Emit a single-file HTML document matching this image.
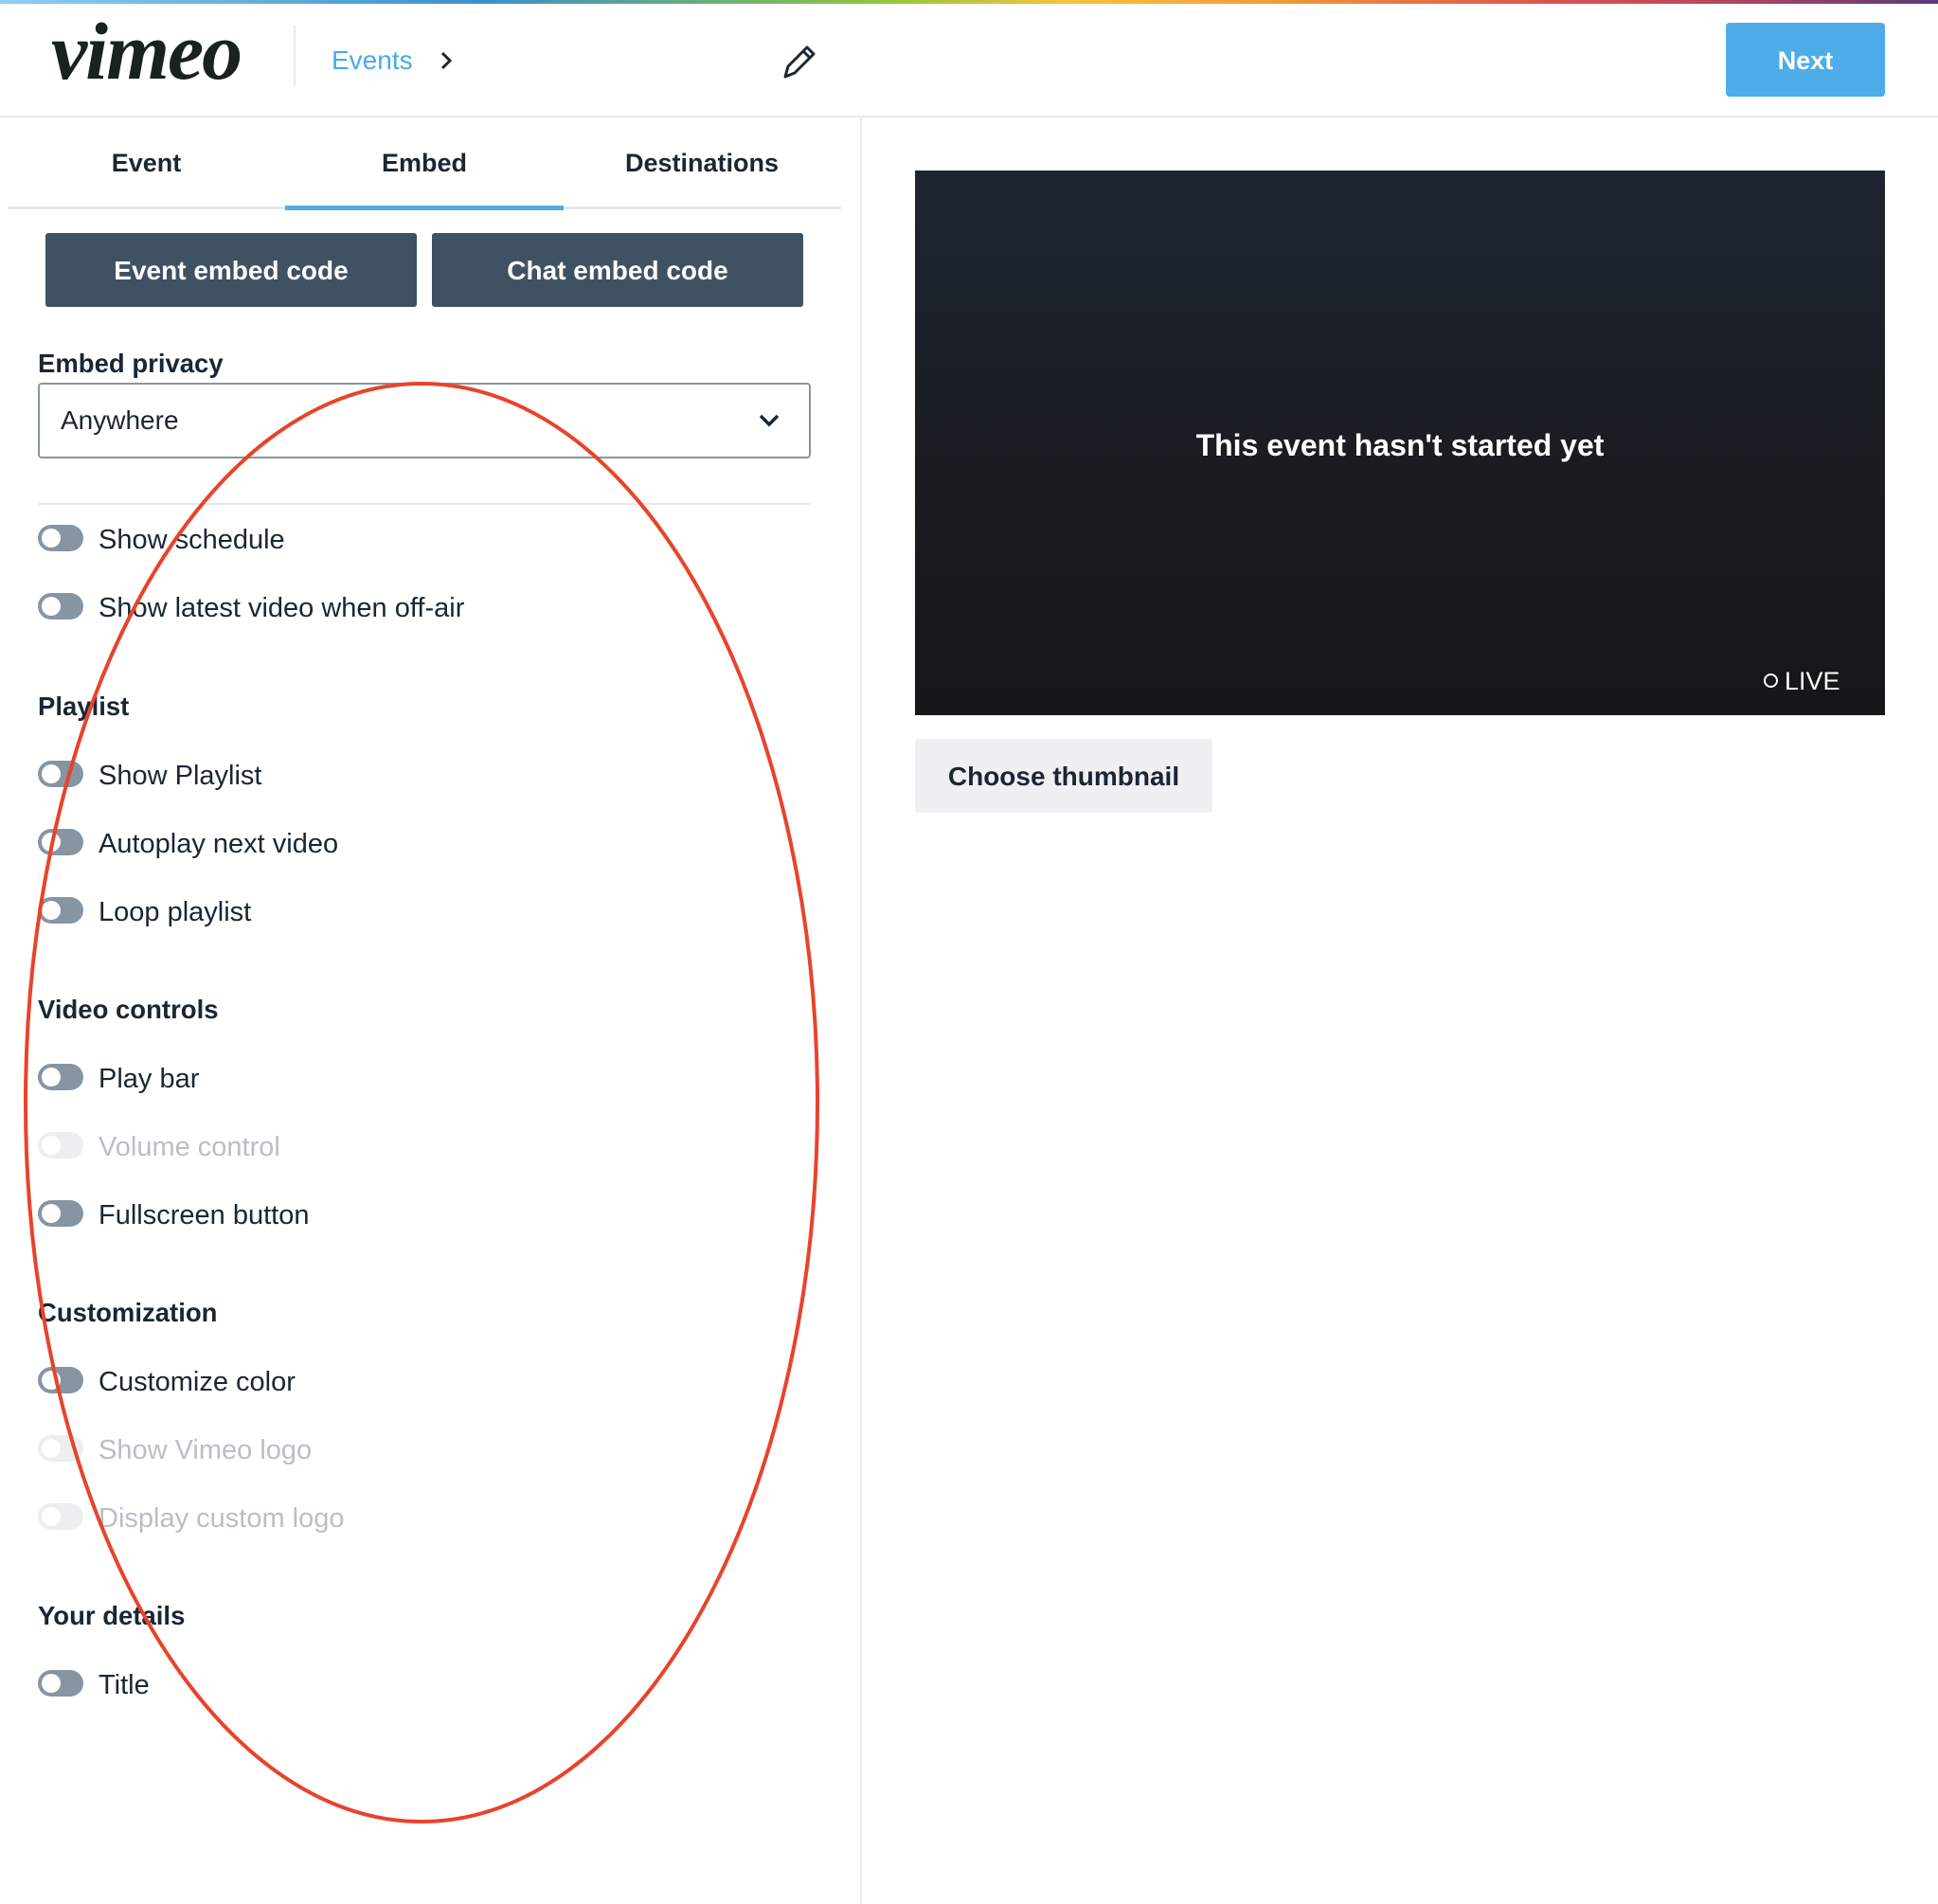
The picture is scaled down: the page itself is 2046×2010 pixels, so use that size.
<!DOCTYPE html>
<html><head><meta charset="utf-8"><style>
*{margin:0;padding:0;box-sizing:border-box}
body{width:2046px;height:2010px;position:relative;background:#fff;font-family:"Liberation Sans",Arial,sans-serif;color:#1a2633;overflow:hidden}
.a{position:absolute}
.t{position:absolute;white-space:nowrap;line-height:40px;height:40px}
.tg{position:absolute;left:40px;width:48px;height:28px;border-radius:14px;background:#8795a3}
.tg::after{content:"";position:absolute;left:4px;top:4px;width:20px;height:20px;border-radius:50%;background:#fff}
.tg.d{background:#eceef0}
.lbl{left:104px;font-size:29px}
.dis{color:#b8bfc6}
.h{left:40px;font-size:27.5px;font-weight:bold}
</style></head><body>
<div class="a" style="left:0;top:0;width:2046px;height:4px;background:linear-gradient(90deg,#8dd0f0,#3d8fcc 25%,#8cc63f 45%,#f5c243 55%,#f09e3a 65%,#d9534f 80%,#b9485e 88%,#5b3a78)"></div>
<div class="t" style="left:54px;top:14px;height:80px;line-height:80px;font-family:'Liberation Serif',serif;font-style:italic;font-weight:bold;font-size:86px;letter-spacing:-2px;color:#1a2121">vimeo</div>
<div class="a" style="left:310px;top:27px;width:2px;height:64px;background:#e6e8ea"></div>
<div class="t" style="left:350px;top:44px;font-size:28px;color:#4aa9e6">Events</div>
<svg class="a" style="left:462px;top:53px" width="18" height="22" viewBox="0 0 18 22"><path d="M5 3l8 8-8 8" fill="none" stroke="#1a2633" stroke-width="3"/></svg>
<svg class="a" style="left:826px;top:45px" width="38" height="39" viewBox="0 0 38 39"><path d="M3 36l3-11L26 5l7 7-20 20zM22 9l7 7" fill="none" stroke="#1a2633" stroke-width="3" stroke-linejoin="round"/></svg>
<div class="a" style="left:1822px;top:24px;width:168px;height:78px;background:#4eade8;border-radius:4px;color:#fff;font-weight:bold;font-size:27px;text-align:center;line-height:80px">Next</div>
<div class="a" style="left:0;top:122px;width:2046px;height:2px;background:#e6e8ea"></div>
<div class="a" style="left:908px;top:123px;width:2px;height:1887px;background:#eceeef"></div>
<div class="t" style="left:8px;width:293px;text-align:center;top:152px;font-size:27px;font-weight:bold">Event</div>
<div class="t" style="left:301px;width:294px;text-align:center;top:152px;font-size:27px;font-weight:bold">Embed</div>
<div class="t" style="left:595px;width:292px;text-align:center;top:152px;font-size:27px;font-weight:bold">Destinations</div>
<div class="a" style="left:8px;top:218px;width:880px;height:3px;background:#e6e8ea"></div>
<div class="a" style="left:301px;top:217px;width:294px;height:5px;background:#4eade8"></div>
<div class="a" style="left:48px;top:246px;width:392px;height:78px;background:#405262;border-radius:3px;color:#fff;font-weight:bold;font-size:28px;text-align:center;line-height:80px">Event embed code</div>
<div class="a" style="left:456px;top:246px;width:392px;height:78px;background:#405262;border-radius:3px;color:#fff;font-weight:bold;font-size:28px;text-align:center;line-height:80px">Chat embed code</div>
<div class="t" style="left:40px;top:364px;font-size:27.5px;font-weight:bold;color:#1a2633">Embed privacy</div>
<div class="a" style="left:40px;top:404px;width:816px;height:80px;border:2px solid #8795a3;border-radius:4px"></div>
<div class="t" style="left:64px;top:424px;font-size:28px">Anywhere</div>
<svg class="a" style="left:800px;top:436px" width="24" height="16" viewBox="0 0 24 16"><path d="M3 3l9 9 9-9" fill="none" stroke="#1a2633" stroke-width="3.5"/></svg>
<div class="a" style="left:40px;top:531px;width:816px;height:2px;background:#e6e8ea"></div>

<div class="tg" style="top:554px"></div><div class="t lbl" style="top:550px">Show schedule</div>
<div class="tg" style="top:626px"></div><div class="t lbl" style="top:622px">Show latest video when off-air</div>
<div class="t h" style="top:726px">Playlist</div>
<div class="tg" style="top:803px"></div><div class="t lbl" style="top:799px">Show Playlist</div>
<div class="tg" style="top:875px"></div><div class="t lbl" style="top:871px">Autoplay next video</div>
<div class="tg" style="top:947px"></div><div class="t lbl" style="top:943px">Loop playlist</div>
<div class="t h" style="top:1046px">Video controls</div>
<div class="tg" style="top:1123px"></div><div class="t lbl" style="top:1119px">Play bar</div>
<div class="tg d" style="top:1195px"></div><div class="t lbl dis" style="top:1191px">Volume control</div>
<div class="tg" style="top:1267px"></div><div class="t lbl" style="top:1263px">Fullscreen button</div>
<div class="t h" style="top:1366px">Customization</div>
<div class="tg" style="top:1443px"></div><div class="t lbl" style="top:1439px">Customize color</div>
<div class="tg d" style="top:1515px"></div><div class="t lbl dis" style="top:1511px">Show Vimeo logo</div>
<div class="tg d" style="top:1587px"></div><div class="t lbl dis" style="top:1583px">Display custom logo</div>
<div class="t h" style="top:1686px">Your details</div>
<div class="tg" style="top:1763px"></div><div class="t lbl" style="top:1759px">Title</div>

<div class="a" style="left:966px;top:180px;width:1024px;height:575px;background:linear-gradient(180deg,#1e2530,#151617)"></div>
<div class="t" style="left:966px;width:1024px;text-align:center;top:450px;font-size:32px;font-weight:bold;color:#fff">This event hasn't started yet</div>
<div class="a" style="left:1862px;top:711px;width:15px;height:15px;border:2px solid #fff;border-radius:50%"></div>
<div class="t" style="left:1884px;top:699px;font-size:27px;color:#fff">LIVE</div>
<div class="a" style="left:966px;top:780px;width:314px;height:78px;background:#eff0f2;border-radius:3px;font-weight:bold;font-size:28px;text-align:center;line-height:80px">Choose thumbnail</div>

<svg class="a" style="left:0;top:0" width="2046" height="2010"><ellipse cx="445" cy="1164" rx="418" ry="759" fill="none" stroke="#e8432b" stroke-width="4"/></svg>
</body></html>
